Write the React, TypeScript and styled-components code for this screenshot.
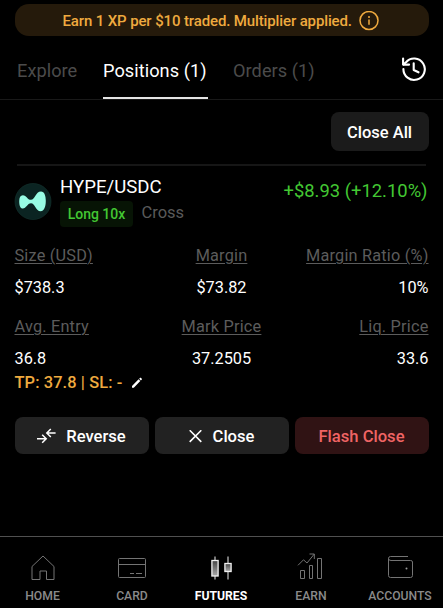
import React from "react";
import styled, { createGlobalStyle } from "styled-components";

const GlobalStyle = createGlobalStyle`
  * { box-sizing: border-box; }
  body { margin: 0; background: #000; }
  button { font-family: inherit; border: 0; padding: 0; margin: 0; }
`;

const Screen = styled.div`
  width: 443px;
  height: 608px;
  overflow: hidden;
  display: flex;
  flex-direction: column;
  background: #000;
  color: #fff;
  font-family: Roboto, sans-serif;
  white-space: nowrap;
`;

const Banner = styled.div`
  flex: none;
  height: 32px;
  margin: 4px 14.5px 0;
  padding: 1px 0 0 48px;
  display: flex;
  align-items: center;
  gap: 7px;
  border-radius: 14px;
  background: #251a0b;
  color: #efaa3f;
  font-size: 15px;
  font-weight: 500;
`;

const BannerText = styled.span`
  width: 289px;
  letter-spacing: -0.13px;
`;

const Tabs = styled.nav`
  flex: none;
  height: 64px;
  padding: 0 16px 0 17px;
  display: flex;
  align-items: flex-end;
  gap: 25px;
  border-bottom: 1px solid #191919;
`;

const Tab = styled.div<{ $active?: boolean; $width: number }>`
  width: ${(p) => p.$width}px;
  height: 46px;
  line-height: 36px;
  font-size: 18.2px;
  letter-spacing: 0.04px;
  color: ${(p) => (p.$active ? "#fff" : "#4b4b4b")};
  border-bottom: 2px solid ${(p) => (p.$active ? "#e4e4e4" : "transparent")};
`;

const HistoryButton = styled.button`
  margin-left: auto;
  height: 46px;
  padding-top: 3px;
  display: flex;
  align-items: flex-start;
  background: none;
  color: #fff;
`;

const Toolbar = styled.div`
  flex: none;
  display: flex;
  justify-content: flex-end;
  padding: 12px 14.5px 13px;
`;

const CloseAll = styled.button`
  width: 98px;
  height: 39px;
  padding-top: 1px;
  border-radius: 8px;
  background: #1b1b1b;
  color: #fff;
  font-size: 16.5px;
  font-weight: 500;
`;

const Divider = styled.div`
  flex: none;
  height: 2px;
  margin: 0 17px;
  background: #161616;
`;

const Header = styled.div`
  flex: none;
  height: 78px;
  padding: 9px 15.5px 0 14px;
  display: flex;
  align-items: flex-start;
`;

const CoinLogo = styled.svg`
  flex: none;
  margin: 7px 8px 0 0;
`;

const Pair = styled.div`
  height: 21px;
  line-height: 25px;
  font-size: 18.6px;
`;

const Tags = styled.div`
  margin-top: 5px;
  display: flex;
  gap: 8.5px;
`;

const Side = styled.span`
  width: 73px;
  height: 26px;
  line-height: 26px;
  border-radius: 4px;
  background: #071405;
  color: #43c733;
  font-size: 14px;
  font-weight: 500;
  text-align: center;
`;

const Mode = styled.span`
  line-height: 23px;
  font-size: 16.5px;
  color: #5a5a5a;
`;

const Pnl = styled.div`
  margin-left: auto;
  line-height: 31px;
  font-size: 18.4px;
  color: #43c733;
`;

const Stats = styled.div`
  flex: none;
  padding: 0 14.5px;
  display: grid;
  grid-template-columns: repeat(3, 1fr);
  row-gap: 9px;
`;

const Stat = styled.div<{ $align: string }>`
  text-align: ${(p) => p.$align};
  font-size: 16.3px;
`;

const StatLabel = styled.div`
  height: 31px;
  line-height: 24px;
  color: #5c5c5c;
  letter-spacing: 0.2px;
  text-decoration: underline;
  text-decoration-thickness: 1px;
  text-underline-offset: 2px;
`;

const StatValue = styled.div`
  height: 31px;
  line-height: 25px;
`;

const Targets = styled.div`
  flex: none;
  height: 46px;
  margin-top: -6px;
  padding-left: 14.5px;
  display: flex;
  align-items: flex-start;
  gap: 10px;
  line-height: 24px;
  font-size: 16.4px;
  letter-spacing: 0.1px;
  font-weight: 500;
  color: #efaa3f;
`;

const TargetText = styled.span`
  width: 107.5px;
`;

const Actions = styled.div`
  flex: none;
  padding: 0 14.5px;
  display: grid;
  grid-template-columns: repeat(3, 1fr);
  gap: 6px;
`;

const Action = styled.button<{ $danger?: boolean; $gap?: number }>`
  height: 37px;
  padding-top: 1px;
  display: flex;
  align-items: center;
  justify-content: center;
  gap: ${(p) => p.$gap ?? 0}px;
  border-radius: 8px;
  background: ${(p) => (p.$danger ? "#301314" : "#222")};
  color: ${(p) => (p.$danger ? "#ef6464" : "#fff")};
  font-size: 16.6px;
  font-weight: 500;
`;

const BottomNav = styled.nav`
  flex: none;
  height: 72px;
  margin-top: auto;
  display: grid;
  grid-template-columns: 85px 94px 84px 96px 82px;
  border-top: 1px solid #505050;
`;

const NavItem = styled.div<{ $active?: boolean }>`
  display: flex;
  flex-direction: column;
  align-items: center;
  padding-top: 15px;
  gap: 5px;
  font-size: 12.2px;
  line-height: 14px;
  font-weight: ${(p) => (p.$active ? 700 : 500)};
  color: ${(p) => (p.$active ? "#fff" : "#8a8a8a")};
`;

const InfoIcon = () => (
  <svg width="20" height="20" viewBox="0 0 20 20" fill="none" stroke="currentColor" strokeWidth="1.5">
    <circle cx="10" cy="9.5" r="9" />
    <path d="M10 8.5v5.2M10 5.1v1.8" />
  </svg>
);

const HistoryIcon = () => (
  <svg width="26" height="26" viewBox="0 0 26 26" fill="none" stroke="currentColor" strokeWidth="2.1" strokeLinecap="round" strokeLinejoin="round">
    <path d="M2.4 13A10.7 10.7 0 1 0 5 6.2L2.4 8.4" />
    <path d="M2.1 2.6v6h6M12.7 7.3V14l4.8 2.3" />
  </svg>
);

const HypeLogo = () => (
  <CoinLogo width="38" height="38" viewBox="0 0 38 38">
    <circle cx="19" cy="19.5" r="18" fill="#0b2422" stroke="#12302c" strokeWidth="0.7" />
    <path
      transform="translate(0 0.6)"
      d="M5.2 18.6C5.2 14.6 6.5 12.6 8.8 12.6C12.6 12.6 13.3 17.2 17 17.2C21 17.2 21.5 8.8 27 8.8C30.4 8.8 31.8 13 31.8 18.5C31.8 24.5 30 28.7 26.7 28.7C21.7 28.7 21 20.7 17 20.7C13.3 20.7 12.3 26 8.8 26C6.4 26 5.2 23 5.2 18.6Z"
      fill="#97fce4"
    />
  </CoinLogo>
);

const PencilIcon = () => (
  <svg width="10" height="24" viewBox="0 0 10 24" fill="#fff">
    <path d="M0 16.7V14.9L6.6 8.3L8.3 10L1.8 16.7ZM7.2 7.7L8.1 6.8Q8.4 6.5 8.8 6.8L9.8 7.8Q10.1 8.1 9.8 8.5L8.9 9.4Z" />
  </svg>
);

const ReverseIcon = () => (
  <svg width="19" height="16" viewBox="0 0 19 16" fill="none" stroke="currentColor" strokeWidth="1.5">
    <path d="M0 10.8H9M5.2 6.8L9.2 10.8L5.2 14.8M18.6 5H10M13.8 1L9.8 5L13.8 9" />
  </svg>
);

const CrossIcon = () => (
  <svg width="13" height="13" viewBox="0 0 13 13" fill="none" stroke="currentColor" strokeWidth="1.6">
    <path d="M0.7 0.3L12.3 11.9M12.3 0.3L0.7 11.9" />
  </svg>
);

const NavSvg = ({ children }: { children: React.ReactNode }) => (
  <svg width="32" height="32" viewBox="0 0 32 32" fill="none" stroke="#747474" strokeWidth="1">
    {children}
  </svg>
);

const HomeIcon = () => (
  <NavSvg>
    <path d="M5 14.5L16 4L27 14.5V27.5H19.5V19H13V27.5H5Z" />
  </NavSvg>
);

const CardIcon = () => (
  <NavSvg>
    <rect x="2.5" y="6.5" width="27" height="19" rx="1" />
    <path d="M2.5 12.5H29.5M14 21.5h4M20 21.5h6" />
  </NavSvg>
);

const FuturesIcon = () => (
  <NavSvg>
    <defs>
      <linearGradient id="candle" x1="0" y1="0" x2="0" y2="1">
        <stop offset="0" stopColor="#444" />
        <stop offset="1" stopColor="#aaa" />
      </linearGradient>
    </defs>
    <g stroke="#f0f0f0">
      <path d="M10 4.5v23M23 4.5v23" />
      <rect x="6.9" y="8.5" width="6.2" height="15.5" fill="url(#candle)" strokeWidth="1.3" />
      <rect x="19.9" y="11.5" width="6.2" height="8" fill="url(#candle)" strokeWidth="1.3" />
    </g>
  </NavSvg>
);

const EarnIcon = () => (
  <NavSvg>
    <path d="M5.5 18.5h4v8h-4zM14.5 13.5h3v13h-3zM22.5 6.5h4v20h-4z" />
    <path d="M3 13.3L8.5 7.8L12 11L19.3 2M14.5 2h4.8v5" />
  </NavSvg>
);

const WalletIcon = () => (
  <NavSvg>
    <path d="M24 4.5H6.5Q4.5 4.5 4.5 6.5Q4.5 8.5 7 8.5H26.5Q28.5 8.5 28.5 10V23.5Q28.5 25.5 26.5 25.5H6.5Q4.5 25.5 4.5 23.5V6.5" />
    <circle cx="22.5" cy="16.5" r="1" fill="#999" stroke="none" />
  </NavSvg>
);

const stats = [
  { label: "Size (USD)", value: "$738.3", align: "left" },
  { label: "Margin", value: "$73.82", align: "center" },
  { label: "Margin Ratio (%)", value: "10%", align: "right" },
  { label: "Avg. Entry", value: "36.8", align: "left" },
  { label: "Mark Price", value: "37.2505", align: "center" },
  { label: "Liq. Price", value: "33.6", align: "right" },
];

export default function App() {
  return (
    <>
      <GlobalStyle />
      <Screen>
        <Banner>
          <BannerText>Earn 1 XP per $10 traded. Multiplier applied.</BannerText>
          <InfoIcon />
        </Banner>
        <Tabs>
          <Tab $width={61}>Explore</Tab>
          <Tab $width={105} $active>Positions (1)</Tab>
          <Tab $width={82}>Orders (1)</Tab>
          <HistoryButton aria-label="History"><HistoryIcon /></HistoryButton>
        </Tabs>
        <Toolbar><CloseAll>Close All</CloseAll></Toolbar>
        <Divider />
        <Header>
          <HypeLogo />
          <div>
            <Pair>HYPE/USDC</Pair>
            <Tags>
              <Side>Long 10x</Side>
              <Mode>Cross</Mode>
            </Tags>
          </div>
          <Pnl>+$8.93 (+12.10%)</Pnl>
        </Header>
        <Stats>
          {stats.map((s) => (
            <Stat key={s.label} $align={s.align}>
              <StatLabel>{s.label}</StatLabel>
              <StatValue>{s.value}</StatValue>
            </Stat>
          ))}
        </Stats>
        <Targets>
          <TargetText>TP: 37.8 | SL: -</TargetText>
          <PencilIcon />
        </Targets>
        <Actions>
          <Action $gap={10}><ReverseIcon />Reverse</Action>
          <Action $gap={11}><CrossIcon />Close</Action>
          <Action $danger>Flash Close</Action>
        </Actions>
        <BottomNav>
          <NavItem><HomeIcon />HOME</NavItem>
          <NavItem><CardIcon />CARD</NavItem>
          <NavItem $active><FuturesIcon />FUTURES</NavItem>
          <NavItem><EarnIcon />EARN</NavItem>
          <NavItem><WalletIcon />ACCOUNTS</NavItem>
        </BottomNav>
      </Screen>
    </>
  );
}
